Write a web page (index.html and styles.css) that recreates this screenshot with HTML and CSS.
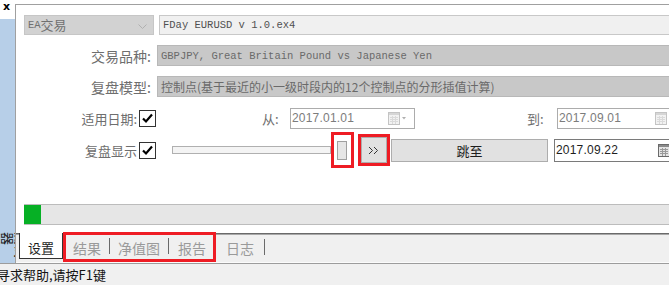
FILE: index.html
```html
<!DOCTYPE html>
<html lang="zh-CN">

<head>
    <meta charset="UTF-8">
    <meta name="viewport" content="width=device-width, initial-scale=1.0">
    <link rel="stylesheet" href="styles.css">
    <title>策略测试</title>
</head>

<body>
    <div class="workspace">
        <div class="dock">
            <span class="dock-close">x</span>
            <div class="dock-strip"><span class="dock-title">测试器</span></div>
        </div>

        <div class="panel">
            <div class="form">
                <div class="row row-ea">
                    <div class="combo">
                        <span class="mono">EA</span>交易
                        <svg class="combo-arrow" width="9" height="5" viewBox="0 0 9 5">
                            <polyline points="0.5,0.5 4.5,4.5 8.5,0.5" fill="none" stroke="#b0b0b0" />
                        </svg>
                    </div>
                    <div class="field field-file mono">FDay EURUSD v 1.0.ex4</div>
                </div>

                <div class="row row-field">
                    <span class="label">交易品种:</span>
                    <div class="field field-off mono">GBPJPY, Great Britain Pound vs Japanese Yen</div>
                </div>

                <div class="row row-field row-model">
                    <span class="label">复盘模型:</span>
                    <div class="field field-off">控制点(基于最近的小一级时段内的12个控制点的分形插值计算)</div>
                </div>

                <div class="row row-dates">
                    <span class="label label-short">适用日期:</span>
                    <span class="check">
                        <svg width="15" height="15" viewBox="0 0 15 15">
                            <path d="M3 7.5 L6 10.5 L12 3.5" fill="none" stroke="#000" stroke-width="2.2" />
                        </svg>
                    </span>
                    <span class="date-label date-from">从:</span>
                    <div class="date date-off date-boxed">
                        <span class="date-text">2017.01.01</span>
                        <svg class="cal" width="19" height="13" viewBox="0 0 19 13">
                            <rect x="0.5" y="0.5" width="11" height="12" fill="#f2f2f2" stroke="#c4c4c4" />
                            <rect x="1" y="1" width="10" height="2" fill="#d6d6d6" />
                            <path d="M2 5.5 H10 M2 7.5 H10 M2 9.5 H10 M4.5 4 V12 M7.5 4 V12" stroke="#dadada" />
                            <polygon points="14,5 18,5 16,7.5" fill="#b0b0b0" />
                        </svg>
                    </div>
                    <span class="date-label date-to">到:</span>
                    <div class="date date-off">
                        <span class="date-text">2017.09.01</span>
                        <svg class="cal" width="19" height="13" viewBox="0 0 19 13">
                            <rect x="0.5" y="0.5" width="11" height="12" fill="#f2f2f2" stroke="#c4c4c4" />
                            <rect x="1" y="1" width="10" height="2" fill="#d6d6d6" />
                            <path d="M2 5.5 H10 M2 7.5 H10 M2 9.5 H10 M4.5 4 V12 M7.5 4 V12" stroke="#dadada" />
                            <polygon points="14,5 18,5 16,7.5" fill="#b0b0b0" />
                        </svg>
                    </div>
                </div>

                <div class="row row-replay">
                    <span class="label label-short">复盘显示</span>
                    <span class="check">
                        <svg width="15" height="15" viewBox="0 0 15 15">
                            <path d="M3 7.5 L6 10.5 L12 3.5" fill="none" stroke="#000" stroke-width="2.2" />
                        </svg>
                    </span>
                    <div class="track"></div>
                    <div class="mark mark-thumb"><div class="thumb"></div></div>
                    <div class="mark mark-step">
                        <button class="step">
                            <svg width="12" height="9" viewBox="0 0 12 9">
                                <polyline points="1,1 4.5,4.5 1,8" fill="none" stroke="#333" />
                                <polyline points="6,1 9.5,4.5 6,8" fill="none" stroke="#333" />
                            </svg>
                        </button>
                    </div>
                    <button class="jump">跳至</button>
                    <div class="date date-on">
                        <span class="date-text">2017.09.22</span>
                        <svg class="cal" width="19" height="13" viewBox="0 0 19 13">
                            <rect x="0.5" y="0.5" width="11" height="12" fill="#e4e4e4" stroke="#6a6a6a" />
                            <rect x="1" y="1" width="10" height="2" fill="#8a8a8a" />
                            <path d="M2 5.5 H10 M2 7.5 H10 M2 9.5 H10 M4.5 4 V12 M7.5 4 V12" stroke="#9a9a9a" />
                            <polygon points="14,5 18,5 16,7.5" fill="#555" />
                        </svg>
                    </div>
                </div>
            </div>

            <div class="progress"><div class="progress-fill" style="width: 17px"></div></div>

            <div class="tabs">
                <span class="tab tab-active">设置</span>
                <div class="mark mark-tabs">
                    <span class="tab">结果</span>
                    <span class="tab-sep"></span>
                    <span class="tab">净值图</span>
                    <span class="tab-sep"></span>
                    <span class="tab">报告</span>
                </div>
                <span class="tab tab-log">日志</span>
                <span class="tab-sep"></span>
            </div>
        </div>
    </div>

    <div class="status">寻求帮助,请按F1键</div>
</body>

</html>
```

FILE: styles.css
```css
body {
  margin: 0;
  width: 669px;
  height: 294px;
  overflow: hidden;
  background: #ffffff;
  font-family: "Noto Sans CJK SC", sans-serif;
}

.mono {
  font-family: "Liberation Mono", "Noto Sans CJK SC", monospace;
  font-size: 10.5px;
}

.workspace {
  display: flex;
  height: 263px;
}

.dock {
  width: 15px;
  display: flex;
  flex-direction: column;
}

.dock-close {
  height: 19px;
  padding-left: 3px;
  font: bold 11px "DejaVu Sans", sans-serif;
  line-height: 14px;
  color: #000000;
}

.dock-strip {
  flex: 1;
  background: #b7cfe8;
  overflow: hidden;
  padding-top: 213px;
  padding-left: 2px;
}

.dock-title {
  display: block;
  writing-mode: vertical-rl;
  text-orientation: sideways;
  font-size: 13px;
  line-height: 13px;
  color: #1a1a1a;
}

.panel {
  flex: 1;
  min-width: 0;
  margin-top: 4px;
  border-top: 1px solid #a0a0a0;
  border-left: 1px solid #a0a0a0;
  display: flex;
  flex-direction: column;
  overflow: hidden;
}

.form {
  padding: 10px 0 0 8px;
  display: flex;
  flex-direction: column;
}

.row {
  display: flex;
  align-items: center;
}

.row-ea {
  height: 20px;
  margin-bottom: 10px;
}

.row-field {
  height: 21px;
  margin-bottom: 10px;
}

.row-dates {
  height: 22px;
  margin-bottom: 3px;
}

.row-replay {
  height: 36px;
}

.combo {
  width: 125px;
  height: 18px;
  border: 1px solid #c6c6c6;
  background: #d2d2d2;
  color: #707070;
  font-size: 13px;
  line-height: 18px;
  padding-left: 3px;
  box-sizing: content-box;
  display: flex;
  align-items: center;
  position: relative;
}

.combo .mono {
  font-size: 10.5px;
}

.combo-arrow {
  position: absolute;
  right: 6px;
  top: 8px;
}

.label {
  width: 127px;
  text-align: right;
  color: #6e6e6e;
  font-size: 14px;
  flex-shrink: 0;
}

.field {
  flex: 1;
  height: 100%;
  margin-left: 6px;
  margin-right: -4px;
  padding-left: 3px;
  box-sizing: border-box;
  display: flex;
  align-items: center;
  white-space: nowrap;
}

.row-ea .field {
  margin-left: 5px;
}

.field-file {
  background: #f0f0f0;
  border: 1px solid #c8c8c8;
  color: #505050;
}

.field-off {
  background: #c8c8c8;
  border: 1px solid #b8b8b8;
  color: #6a6a6a;
}

.row-model .field {
  font-size: 12px;
}

.label-short {
  width: 113px;
  font-size: 13px;
}

.check {
  width: 15px;
  height: 15px;
  margin-left: 2px;
  border: 1px solid #333333;
  background: #ffffff;
  flex-shrink: 0;
}

.check svg {
  display: block;
}

.date-label {
  font-size: 13px;
  color: #6e6e6e;
  flex-shrink: 0;
}

.date-from {
  margin-left: 106px;
  width: 28px;
}

.date-to {
  margin-left: 112px;
  width: 30px;
}

.date {
  height: 21px;
  box-sizing: border-box;
  display: flex;
  align-items: center;
  padding-left: 1px;
  font-family: "Liberation Sans", sans-serif;
  font-size: 12px;
  letter-spacing: 0.2px;
  flex: 1;
  margin-right: -20px;
}

.date-text {
  width: 96px;
  flex-shrink: 0;
}

.date-off {
  border: 1px solid #acacac;
  color: #7c7c7c;
}

.date-boxed {
  flex: 0 0 125px;
  margin-right: 0;
}

.date-on {
  height: 23px;
  margin-left: 6px;
  border: 1px solid #7a7a7a;
  color: #1e1e1e;
}

.date-on .date-text {
  width: 102px;
}

.track {
  width: 159px;
  height: 8px;
  margin-left: 16px;
  box-sizing: border-box;
  border: 1px solid #b0b0b0;
  background: #f4f4f4;
  flex-shrink: 0;
}

.mark {
  border: 3px solid #ee1c24;
  box-sizing: border-box;
  flex-shrink: 0;
}

.mark-thumb {
  width: 23px;
  height: 36px;
  display: flex;
  align-items: center;
  padding-left: 3px;
}

.thumb {
  width: 10px;
  height: 19px;
  box-sizing: border-box;
  border: 1px solid #a0a0a0;
  background: #e6e6e6;
}

.mark-step {
  width: 32px;
  height: 32px;
  margin-left: 4px;
}

.step {
  width: 26px;
  height: 26px;
  margin: 0;
  padding: 0;
  border: 1px solid #adadad;
  background: #e1e1e1;
  display: flex;
  align-items: center;
  justify-content: center;
}

.jump {
  width: 157px;
  height: 23px;
  margin: 0 0 0 1px;
  padding: 0;
  border: 1px solid #adadad;
  background: #e1e1e1;
  font-family: "Noto Sans CJK SC", sans-serif;
  font-size: 13px;
  color: #1e1e1e;
  flex-shrink: 0;
}

.progress {
  height: 21px;
  margin: 36px 0 0 8px;
  box-sizing: border-box;
  border-top: 1px solid #bcbcbc;
  border-bottom: 1px solid #bcbcbc;
  background: #e6e6e6;
}

.progress-fill {
  height: 100%;
  background: #06b025;
}

.tabs {
  height: 30px;
  margin-top: 8px;
  box-sizing: border-box;
  border-top: 1px solid #6a6a6a;
  border-bottom: 1px solid #fbfbfb;
  box-shadow: inset 0 1px #a8a8a8;
  background: #f0f0f0;
  display: flex;
  align-items: flex-start;
  padding-left: 3px;
}

.tab {
  font-size: 14px;
  line-height: 20px;
  color: #9a9a9a;
  padding-top: 4px;
  flex-shrink: 0;
}

.tab-active {
  width: 44px;
  height: 26px;
  margin-top: -1px;
  box-sizing: border-box;
  border: 1px solid #333333;
  border-top: none;
  background: #ffffff;
  color: #1e1e1e;
  text-align: center;
  font-size: 13px;
  padding-top: 5px;
}

.mark-tabs {
  height: 30px;
  margin-top: -2px;
  display: flex;
  align-items: flex-start;
  padding: 0 7px 0 7px;
  gap: 8px;
  border-width: 3px;
}

.mark-tabs .tab {
  padding-top: 3px;
}

.mark-tabs .tab:last-child {
  margin-left: 1px;
}

.tab-sep {
  width: 1px;
  height: 16px;
  margin-top: 5px;
  background: #6a6a6a;
  flex-shrink: 0;
}

.mark-tabs .tab-sep {
  margin-top: 3px;
}

.tab-log {
  margin-left: 10px;
  margin-right: 10px;
}

.status {
  height: 21px;
  border-top: 1px solid #9c9c9c;
  background: #f0f0f0;
  font-size: 13px;
  line-height: 21px;
  color: #141414;
  margin-left: 0;
  text-indent: -3px;
  white-space: nowrap;
  overflow: hidden;
}
```
